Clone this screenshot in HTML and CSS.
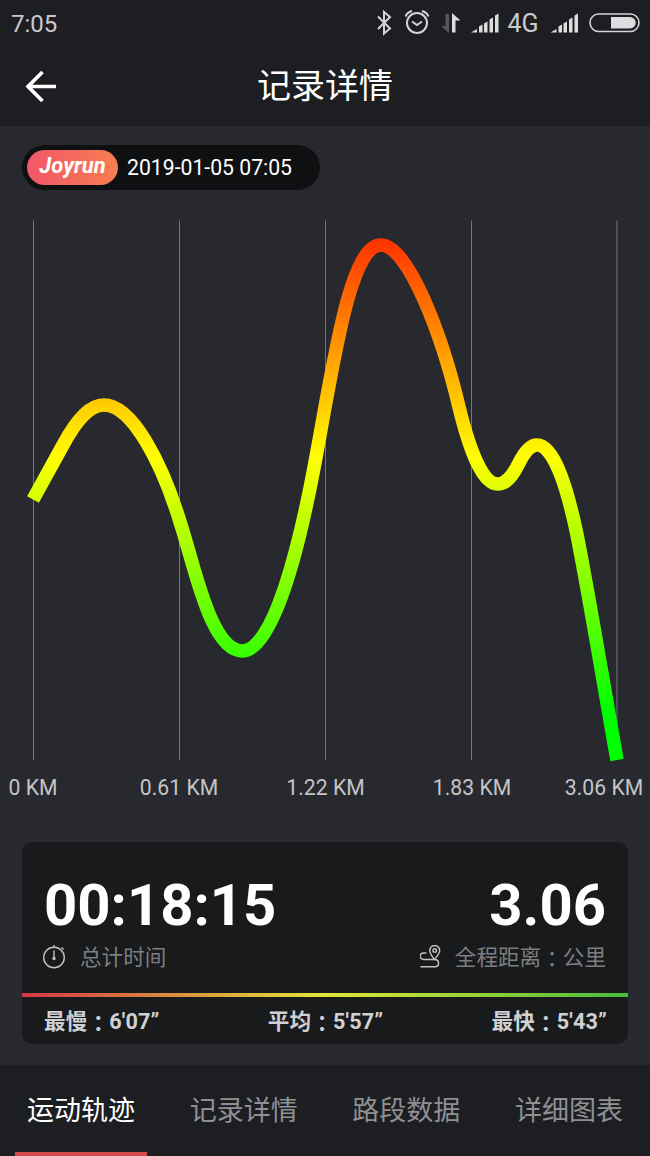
FILE: index.html
```
<!DOCTYPE html>
<html lang="zh-CN">
<head>
  <meta charset="UTF-8">
  <title>记录详情</title>
  <link rel="stylesheet" href="styles.css">
</head>
<body>
  <div class="status">
    <span class="clock">7:05</span>
    <svg class="signals" width="274" height="46" viewBox="0 0 274 46">
      <!-- bluetooth -->
      <path class="line" d="M2 16.500l12 12-6 5V12l6 5L2 29"/>
      <!-- alarm -->
      <g class="line">
        <circle cx="41" cy="23" r="10"/>
        <path d="M36 21.500l5 3.500 5-3.500M29.500 16.500q2-4.500 6.500-5.500M52.500 16.500q-2-4.500-6.500-5.500"/>
      </g>
      <!-- data arrows -->
      <path class="dim" d="M69.500 14h3.500v19L65 26h4.500z"/>
      <path class="fill" d="M76 32.500V13l8.500 7.500H79.500v12z"/>
      <path class="fill" d="M95 32.500l6-3.500v3.500zM103 26.500l3.500-2v8H103zM108 23.500l3.500-2v11H108zM113.500 19.500l3.500-2v15h-3.500zM119 15.500l3.500-2v19H119z"/>
      <text class="net" x="131.500" y="32">4G</text>
      <path class="fill" d="M174.500 32.500l6-3.500v3.500zM182.500 26.500l3.500-2v8h-3.500zM187.500 23.500l3.500-2v11h-3.500zM193 19.500l3.500-2v15H193zM198.500 15.500l3.500-2v19h-3.500z"/>
      <!-- battery -->
      <rect class="line thin" x="214" y="14" width="49" height="17.500" rx="8.700"/>
      <path class="fill" d="M235 17h19a5.700 5.700 0 0 1 0 11.500H235z"/>
    </svg>
  </div>

  <div class="header">
    <svg class="back" width="32" height="32" viewBox="0 0 32 32">
      <path d="M31 16.500H3M17.500 2L3 16.500 17.500 31"/>
    </svg>
    <h1>记录详情</h1>
  </div>

  <div class="main">
    <div class="badge">
      <span class="logo">Joyrun</span>
      <span class="date">2019-01-05 07:05</span>
    </div>

    <svg class="chart" width="650" height="610" viewBox="0 210 650 610">
      <defs>
        <linearGradient id="pace" gradientUnits="userSpaceOnUse" x1="0" y1="220" x2="0" y2="760">
          <stop offset="0" stop-color="#ff2000"/>
          <stop offset="0.44" stop-color="#ffff00"/>
          <stop offset="0.91" stop-color="#00ff00"/>
        </linearGradient>
      </defs>
      <path class="grid" d="M33.500 220.500V760M179.500 220.500V760M325.500 220.500V760M471.500 220.500V760M617 220.500V760"/>
      <path class="curve" d="M33 499.500L63 445C78 417 91 405 104 405C132 405 162 462 181 525C195 568 211 651 242.300 651C273 651 299 550 316 457C334 360 350 245 381 245C408 245 442 335 459 407C470 452 483 484 497.500 484C507 484 513 475 519 463C524 453 530 445 537 445C555 445 568 493 576 530C586 578 602 675 617 760"/>
      <g class="axis">
        <text x="33" y="795">0 KM</text>
        <text x="179" y="795">0.61 KM</text>
        <text x="325.500" y="795">1.22 KM</text>
        <text x="472" y="795">1.83 KM</text>
        <text x="604" y="795">3.06 KM</text>
      </g>
    </svg>

    <div class="card">
      <div class="totals">
        <div class="total">
          <div class="number">00:18:15</div>
          <div class="label">
            <svg width="24" height="26" viewBox="0 0 24 26">
              <circle cx="11" cy="12.500" r="10.300"/>
              <path d="M11 2.500V0M11 5.500v7M18.500 2.500l2 2"/>
              <circle class="dot" cx="11" cy="13.500" r="1"/>
            </svg>
            <span>总计时间</span>
          </div>
        </div>
        <div class="total right">
          <div class="number">3.06</div>
          <div class="label">
            <svg width="22" height="26" viewBox="0 0 22 26">
              <path d="M14.500 14.500C12 11 9.700 8.500 9.700 5.500a5 5 0 0 1 10 0C19.700 8.500 17 11 14.500 14.500z"/>
              <circle cx="14.700" cy="5.500" r="1.800"/>
              <path d="M6.500 8H3.500a3 3 0 0 0 0 6.500h12a3.700 3.700 0 0 1 0 7.300H.5"/>
            </svg>
            <span>全程距离<i class="colon" lang="zh-TW">：</i>公里</span>
          </div>
        </div>
      </div>
      <div class="bar"></div>
      <div class="paces">
        <span>最慢<i class="colon" lang="zh-TW">：</i>6'07”</span>
        <span>平均<i class="colon" lang="zh-TW">：</i>5'57”</span>
        <span>最快<i class="colon" lang="zh-TW">：</i>5'43”</span>
      </div>
    </div>
  </div>

  <div class="tabs">
    <a class="tab active">运动轨迹</a>
    <a class="tab">记录详情</a>
    <a class="tab">路段数据</a>
    <a class="tab">详细图表</a>
  </div>
</body>
</html>
```
FILE: styles.css
```
*{box-sizing: border-box;}
html,body{height: 100%;margin: 0;}
body{
  display: flex;
  flex-direction: column;
  width: 650px;
  height: 1156px;
  overflow: hidden;
  font-family: Roboto, 'Noto Sans CJK SC', sans-serif;
  background: #1d1e22;
  color: #fff;
}
.status{
  display: flex;
  justify-content: space-between;
  align-items: center;
  height: 46px;
  padding: 0 0 0 11px;
}
.clock{
  font-size: 24px;
  color: #c9cacc;
  padding-top: 2px;
}
.line{
  fill: none;
  stroke: #d4d5d6;
  stroke-width: 2;
}
.thin{stroke-width: 1.6;}
.fill{fill: #dcddde;}
.dim{fill: #56575b;}
.net{font-size: 25px;fill: #c9cacc;}

.header{
  display: flex;
  align-items: center;
  height: 80px;
  padding: 0 24px 0 25px;
}
.header h1{
  flex: 1;
  margin: 0 33px 0 0;
  font-size: 34px;
  line-height: 80px;
  font-weight: 400;
  text-align: center;
}
.back{
  fill: none;
  stroke: #fff;
  stroke-width: 3.6;
}

.main{
  height: 939px;
  padding-top: 19px;
  background: #28292e;
}
.badge{
  display: flex;
  align-items: center;
  width: 298px;
  height: 45px;
  margin-left: 22px;
  padding-left: 5px;
  border-radius: 23px;
  background: #0f1012;
}
.logo{
  width: 91px;
  height: 35px;
  border-radius: 18px;
  background: linear-gradient(90deg, #f1566b, #f77e50);
  font-size: 22px;
  line-height: 32px;
  font-weight: 700;
  font-style: italic;
  text-align: center;
}
.date{
  margin-left: 9px;
  font-size: 21.2px;
}

.chart{
  display: block;
  margin-top: 20px;
}
.grid{
  fill: none;
  stroke: #76777b;
  stroke-width: 1;
}
.curve{
  fill: none;
  stroke: url(#pace);
  stroke-width: 13.5;
}
.axis text{
  font-size: 21.2px;
  fill: #c4c5c8;
  text-anchor: middle;
}

.card{
  width: 606px;
  height: 202px;
  margin: 22px 0 0 22px;
  border-radius: 10px;
  background: #191a1c;
}
.totals{
  display: flex;
  justify-content: space-between;
  height: 151px;
  padding: 33px 22px 0 21px;
}
.right{text-align: right;}
.number{
  padding-left: 1px;
  font-size: 58px;
  line-height: 60px;
  font-weight: 700;
}
.label{
  display: flex;
  align-items: center;
  height: 32px;
  margin-top: 7px;
  font-size: 21.6px;
  line-height: 32px;
  color: #7d7e81;
}
.label svg{
  margin-right: 13px;
  fill: none;
  stroke: #c2c3c5;
  stroke-width: 1.4;
}
.label .dot{fill: #c2c3c5;}
.colon{
  font-family: 'Noto Sans CJK TC', sans-serif;
  font-style: normal;
  line-height: 1;
  vertical-align: -2px;
}
.bar{
  height: 4px;
  background: linear-gradient(90deg, #d63648, #e2e636 50%, #48bc3c);
}
.paces{
  display: flex;
  justify-content: space-between;
  padding: 2px 21px 0 22px;
  font-size: 21.6px;
  line-height: 46px;
  font-weight: 700;
  letter-spacing: 0.15px;
  color: #d0d1d2;
}

.tabs{
  display: flex;
  justify-content: space-between;
  height: 91px;
  padding: 0 15px;
}
.tab{
  width: 132px;
  padding-top: 4px;
  font-size: 27px;
  line-height: 84px;
  text-align: center;
  color: #8f9093;
}
.tab.active{
  border-bottom: 4px solid #d6474e;
  color: #fff;
}
```
